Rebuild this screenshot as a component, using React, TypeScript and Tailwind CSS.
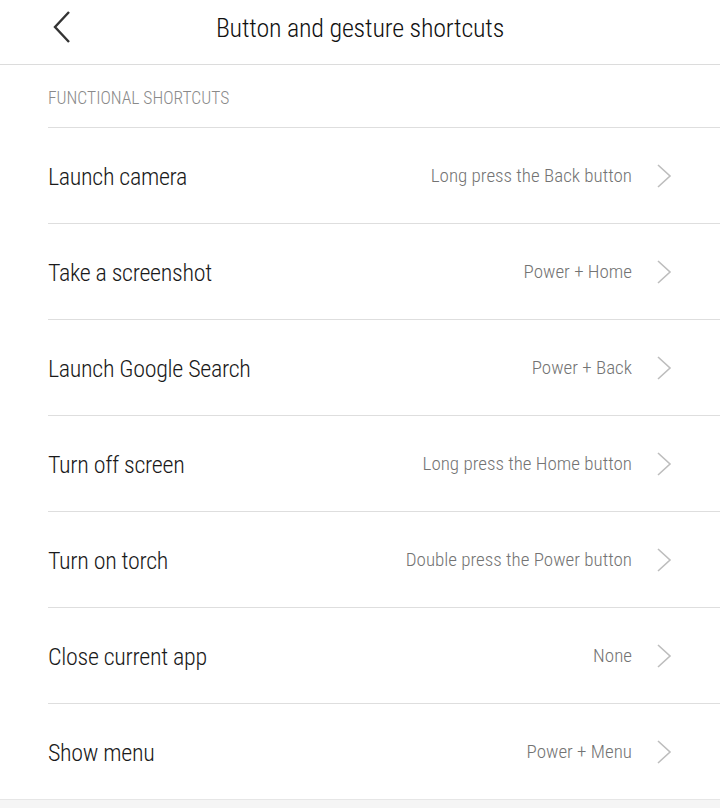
const rows = [
  { title: "Launch camera", value: "Long press the Back button" },
  { title: "Take a screenshot", value: "Power + Home" },
  { title: "Launch Google Search", value: "Power + Back" },
  { title: "Turn off screen", value: "Long press the Home button" },
  { title: "Turn on torch", value: "Double press the Power button" },
  { title: "Close current app", value: "None" },
  { title: "Show menu", value: "Power + Menu" },
];

const font = { fontFamily: '"Roboto Condensed", "Liberation Sans", sans-serif' };

function Chevron() {
  return (
    <svg width="18" height="26" viewBox="0 0 18 26" className="shrink-0">
      <path d="M3 2 L15 13 L3 24" fill="none" stroke="#bdbdbd" strokeWidth="1.6" />
    </svg>
  );
}

export default function App() {
  return (
    <div className="w-[720px] h-[808px] bg-[#f5f5f5] overflow-hidden font-light" style={font}>
      <div className="bg-white">
        {/* Header */}
        <header className="h-[65px] flex items-center relative border-b border-[#dcdcdc]">
          <svg width="22" height="36" viewBox="0 0 22 36" className="ml-[51px] -mt-[10px]">
            <path d="M18 3 L4 18 L18 33" fill="none" stroke="#333" strokeWidth="2.4" />
          </svg>
          <h1 className="absolute inset-x-0 top-[9px] text-center text-[26px] text-[#111] tracking-[-0.2px]">
            Button and gesture shortcuts
          </h1>
        </header>

        {/* Section label */}
        <div className="pl-12 h-[62px] flex items-center">
          <span className="text-[17.5px] text-[#8a8a8a] uppercase mt-[4px]">Functional shortcuts</span>
        </div>

        {/* Rows */}
        <ul className="pl-12">
          {rows.map((r) => (
            <li key={r.title} className="h-[96px] flex items-center border-t border-[#dedede] pr-[47px]">
              <span className="flex-1 text-[24px] text-[#1a1a1a] tracking-[-0.3px] mt-[2px]">{r.title}</span>
              <span className="text-[19px] text-[#737373] mr-[23px] mt-[2px]">{r.value}</span>
              <Chevron />
            </li>
          ))}
        </ul>
      </div>
      <div className="h-px bg-[#e6e6e6]" />
    </div>
  );
}
